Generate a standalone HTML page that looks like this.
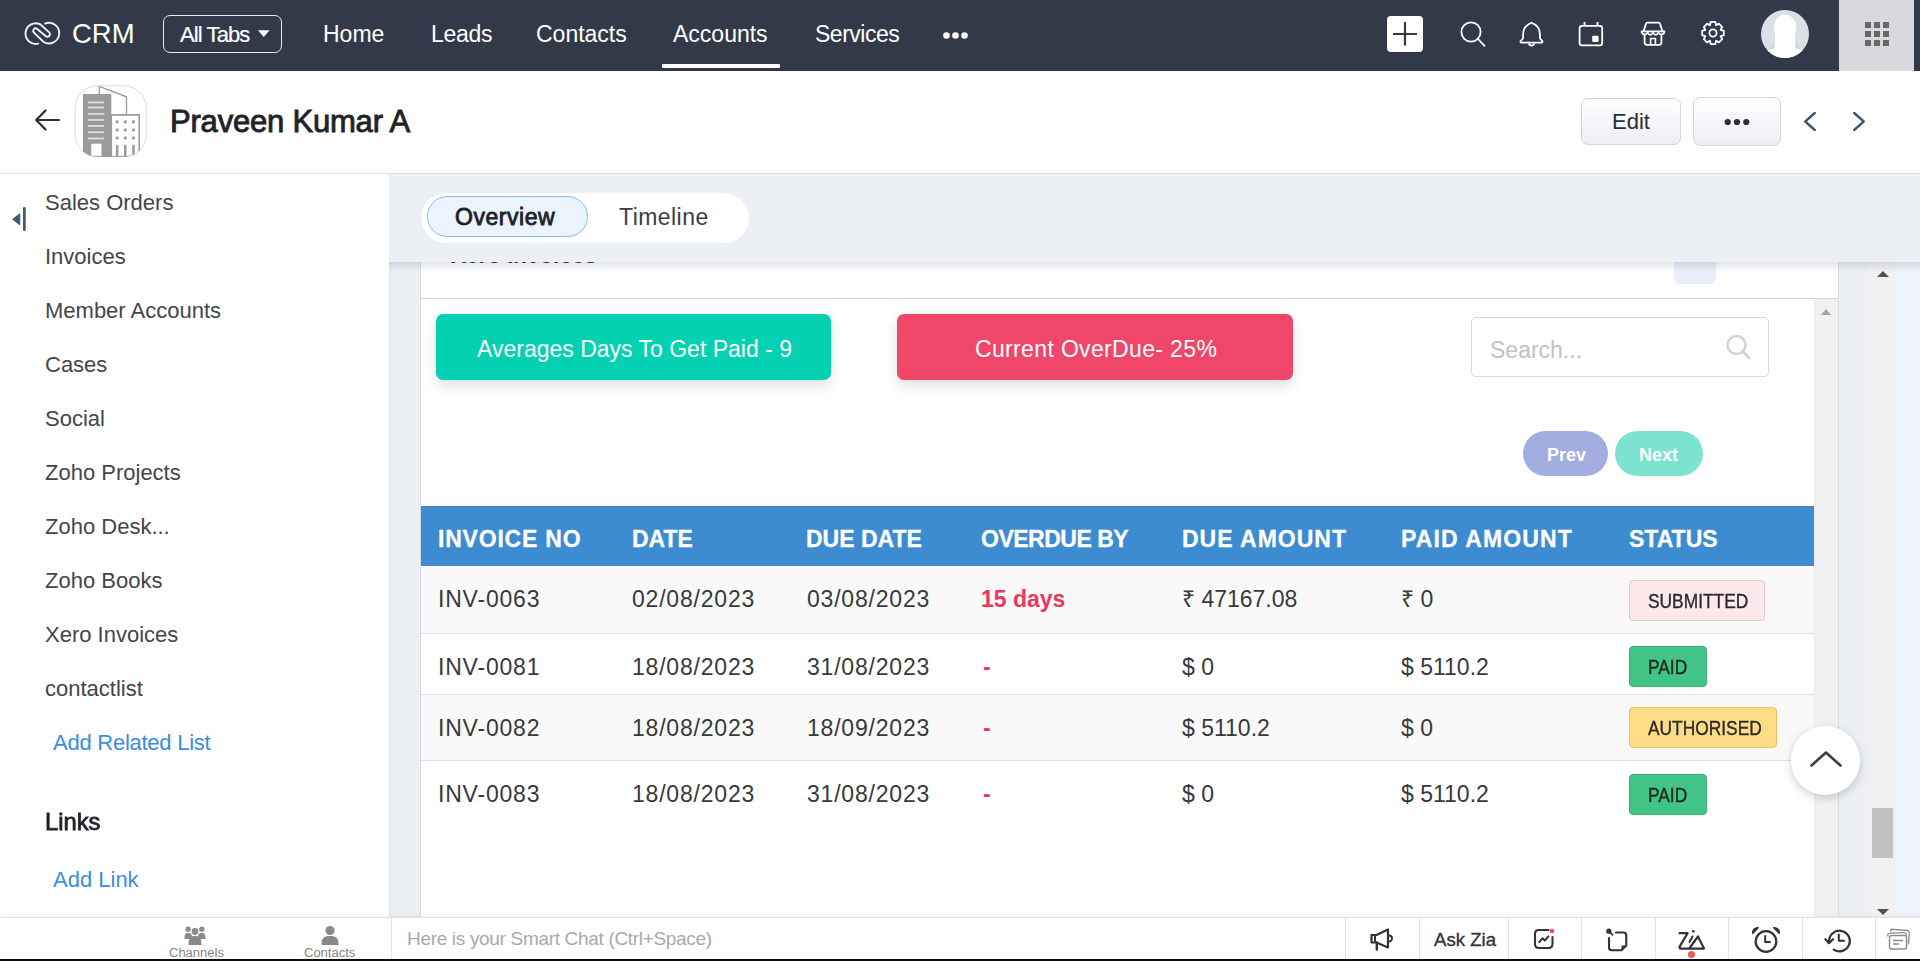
<!DOCTYPE html>
<html><head><meta charset="utf-8">
<style>
*{box-sizing:border-box;margin:0;padding:0}
html,body{width:1920px;height:961px;overflow:hidden;background:#eceff3;font-family:"Liberation Sans",sans-serif;position:relative}
.abs{position:absolute}
.t{position:absolute;white-space:nowrap;line-height:1}
/* nav */
#nav{left:0;top:0;width:1920px;height:71px;background:#323a49;z-index:5}
.nv{color:#fff;font-size:23px}
/* subheader */
#sub{left:0;top:70px;width:1920px;height:104px;background:#fff;border-bottom:1px solid #dcdfe3}
/* sidebar */
#side{left:0;top:174px;width:389px;height:743px;background:#fff}
.si{color:#42464c;font-size:22px}
/* content */
#card{left:421px;top:262px;width:1418px;height:655px;background:#fff}
.th{color:#fff;font-size:23px;font-weight:bold;-webkit-text-stroke:0.3px #fff}
.td{color:#36393d;font-size:23px}
.badge{font-size:19.5px;transform:scaleX(0.89);transform-origin:0 0;-webkit-text-stroke:0.35px currentColor}
</style></head>
<body>
<!-- NAV -->
<div id="nav" class="abs">
  <svg class="abs" style="left:18px;top:16px" width="48" height="36" viewBox="0 0 48 36"><path d="M20.3,27.6 A10.3,10.3 0 1 1 22.2,8.3 L31.2,16.4 A2.5,2.5 0 0 1 27.6,20 L18.9,12.7 A2.5,2.5 0 0 0 15.7,16.4 L25.4,25.8 A10.3,10.3 0 1 0 27,7.6" fill="none" stroke="#eef0f5" stroke-width="1.9" stroke-linecap="round" stroke-linejoin="round"/></svg>
  <div class="t nv" style="left:72px;top:20px;font-size:27.5px">CRM</div>
  <div class="abs" style="left:163px;top:15px;width:119px;height:38px;border:1.5px solid #e8eaee;border-radius:7px"></div>
  <div class="t nv" style="left:180px;top:24px;font-size:22px;letter-spacing:-0.9px;-webkit-text-stroke:0.2px #fff">All Tabs</div>
  <div class="t nv" style="left:323px;top:23px">Home</div>
  <div class="t nv" style="left:431px;top:23px;letter-spacing:-0.3px">Leads</div>
  <div class="t nv" style="left:536px;top:23px">Contacts</div>
  <div class="t nv" style="left:673px;top:23px">Accounts</div>
  <div class="t nv" style="left:815px;top:23px;letter-spacing:-0.5px">Services</div>
  <div class="abs" style="left:662px;top:64px;width:118px;height:4px;background:#fff;border-radius:1px"></div>
  <div class="abs" style="left:1839px;top:0;width:75px;height:71px;background:#d8d9dd"></div>
  <svg class="abs" style="left:258px;top:29px" width="12" height="9" viewBox="0 0 12 9"><path d="M0,1.2 L11.5,1.2 L5.75,8Z" fill="#fff"/></svg>
  <svg class="abs" style="left:941px;top:29px" width="30" height="14" viewBox="0 0 30 14"><circle cx="5.5" cy="6.5" r="3.3" fill="#fff"/><circle cx="14.5" cy="6.5" r="3.3" fill="#fff"/><circle cx="23.5" cy="6.5" r="3.3" fill="#fff"/></svg>
  <svg class="abs" style="left:1387px;top:16px" width="36" height="36" viewBox="0 0 36 36"><rect x="0" y="0" width="36" height="36" rx="4" fill="#fff"/><path d="M18,6 V29.5 M6,18 H30" stroke="#323a4a" stroke-width="2.2"/></svg>
  <svg class="abs" style="left:1458px;top:19px" width="30" height="30" viewBox="0 0 30 30"><circle cx="13" cy="13" r="9.6" fill="none" stroke="#fff" stroke-width="1.8"/><path d="M20,20 L26.5,26.8" stroke="#fff" stroke-width="1.8" stroke-linecap="round"/></svg>
  <svg class="abs" style="left:1518px;top:19px" width="28" height="30" viewBox="0 0 28 30"><path d="M5,19.5 C5,13 4.8,7 13.5,3.8 C22.2,7 22,13 22,19.5 L24.3,22 C24.8,22.7 24.4,23.6 23.5,23.6 H3.5 C2.6,23.6 2.2,22.7 2.7,22 Z" fill="none" stroke="#fff" stroke-width="1.8" stroke-linejoin="round"/><path d="M10.8,24.6 A2.8,2.8 0 0 0 16.2,24.6" fill="none" stroke="#fff" stroke-width="1.8"/></svg>
  <svg class="abs" style="left:1576px;top:19px" width="30" height="30" viewBox="0 0 30 30"><rect x="3.6" y="6.8" width="22.6" height="19.6" rx="2.4" fill="none" stroke="#fff" stroke-width="1.8"/><path d="M8.5,3 V7 M21.5,3 V7" stroke="#fff" stroke-width="1.8"/><rect x="16.2" y="16.8" width="6.4" height="6.2" rx="1.2" fill="#fff"/></svg>
  <svg class="abs" style="left:1638px;top:19px" width="30" height="30" viewBox="0 0 30 30"><path d="M5.5,12.5 L7.8,5.2 C8.1,4.2 8.8,3.7 9.8,3.7 H20.2 C21.2,3.7 21.9,4.2 22.2,5.2 L24.5,12.5" fill="none" stroke="#fff" stroke-width="1.8" stroke-linejoin="round"/><path d="M3.6,12.3 H26.4 C26.4,16 22,16.5 20.5,13.6 C19,16.5 16.5,16.5 15,13.6 C13.5,16.5 11,16.5 9.5,13.6 C8,16.5 3.6,16 3.6,12.3Z" fill="none" stroke="#fff" stroke-width="1.7" stroke-linejoin="round"/><path d="M6.6,15.8 V23.6 C6.6,25 7.3,25.8 8.8,25.8 H21.2 C22.7,25.8 23.4,25 23.4,23.6 V15.8" fill="none" stroke="#fff" stroke-width="1.8"/><path d="M12.6,25.8 V19.5 H17.4 V25.8" fill="none" stroke="#fff" stroke-width="1.7"/></svg>
  <svg class="abs" style="left:1699px;top:19px" width="28" height="28" viewBox="0 0 28 28"><g transform="translate(14,14) scale(0.9) translate(-14,-16)"><path d="M11.4,3.6 H16.6 L17.4,7.4 L20.6,5.6 L24.2,9.4 L22.4,12.6 L26,13.6 V18.6 L22.4,19.6 L24.2,22.8 L20.6,26.4 L17.4,24.6 L16.6,28.4 H11.4 L10.6,24.6 L7.4,26.4 L3.8,22.8 L5.6,19.6 L2,18.6 V13.6 L5.6,12.6 L3.8,9.4 L7.4,5.6 L10.6,7.4 Z" fill="none" stroke="#fff" stroke-width="2" stroke-linejoin="round"/><circle cx="14" cy="16" r="4" fill="none" stroke="#fff" stroke-width="2"/></g></svg>
  <svg class="abs" style="left:1761px;top:10px" width="48" height="48" viewBox="0 0 48 48"><defs><clipPath id="av"><circle cx="24" cy="24" r="24"/></clipPath><filter id="bl"><feGaussianBlur stdDeviation="0.7"/></filter></defs><circle cx="24" cy="24" r="24" fill="#dcdfe4"/><g clip-path="url(#av)"><g fill="#fff" filter="url(#bl)"><ellipse cx="24" cy="17.5" rx="11" ry="13"/><rect x="14" y="22" width="20" height="16" rx="4"/><path d="M0,60 C0,44 6,37 18,36 H30 C42,37 48,44 48,60Z"/></g><path d="M12.5,30 C12.5,34 13,37 14,38 L8,40 C10,36 11,33 12.5,30Z M35.5,30 C35.5,34 35,37 34,38 L40,40 C38,36 37,33 35.5,30Z" fill="#d3d6db" filter="url(#bl)"/></g></svg>
  <svg class="abs" style="left:1864px;top:21px" width="26" height="26" viewBox="0 0 26 26" fill="#686868"><rect x="1" y="1" width="6" height="6"/><rect x="10" y="1" width="6" height="6"/><rect x="19" y="1" width="6" height="6"/><rect x="1" y="10" width="6" height="6"/><rect x="10" y="10" width="6" height="6"/><rect x="19" y="10" width="6" height="6"/><rect x="1" y="19" width="6" height="6"/><rect x="10" y="19" width="6" height="6"/><rect x="19" y="19" width="6" height="6"/></svg>

</div>
<!-- SUBHEADER -->
<div id="sub" class="abs">
  <div class="t" style="left:170px;top:36px;font-size:31px;color:#1f2328;-webkit-text-stroke:0.9px #1f2328;letter-spacing:-0.2px">Praveen Kumar A</div>
  <div class="abs" style="left:1581px;top:28px;width:100px;height:47px;border:1px solid #d3d6dc;border-radius:7px;background:linear-gradient(#fff,#eceef4)"></div>
  <div class="t" style="left:1612px;top:41px;font-size:22px;color:#2b2d3a">Edit</div>
  <div class="abs" style="left:1693px;top:27px;width:88px;height:49px;border:1px solid #d3d6dc;border-radius:7px;background:linear-gradient(#fff,#eceef4)"></div>

  <svg class="abs" style="left:32px;top:36px" width="30" height="28" viewBox="0 0 30 28"><path d="M27,14 H5 M13.5,4.5 L4.2,14 L13.5,23.5" fill="none" stroke="#2b2f36" stroke-width="2.2" stroke-linecap="round" stroke-linejoin="round"/></svg>
  <svg class="abs" style="left:70px;top:12px" width="82" height="80" viewBox="0 0 82 80"><defs><clipPath id="bc"><rect x="5.2" y="3.75" width="71" height="71" rx="22"/></clipPath></defs>
   <rect x="5.2" y="3.75" width="71" height="71" rx="22" fill="#fff" stroke="#dcdcdc" stroke-width="1"/>
   <g clip-path="url(#bc)">
    <path d="M29.3,12 V4.4 L56.5,14.8 V32.5" fill="none" stroke="#9a9a9a" stroke-width="1.3"/>
    <rect x="12.9" y="12" width="28.4" height="70" fill="#9b9b9b"/>
    <g fill="#e2e2e2"><rect x="17.9" y="19.6" width="16.3" height="1.7"/><rect x="17.9" y="24.6" width="16.3" height="1.7"/><rect x="17.9" y="31" width="16.3" height="1.7"/><rect x="17.9" y="37.1" width="16.3" height="1.7"/><rect x="17.9" y="43.1" width="16.3" height="1.7"/><rect x="17.9" y="49.4" width="16.3" height="1.7"/><rect x="17.9" y="55.6" width="16.3" height="1.7"/></g>
    <rect x="21.25" y="61.7" width="10.25" height="20" fill="#fff"/>
    <path d="M41.3,74.5 V32.9 H69.2 V74.5" fill="none" stroke="#9b9b9b" stroke-width="1.6"/>
    <g fill="#9b9b9b"><rect x="45.7" y="38.4" width="2.9" height="2.9"/><rect x="53.8" y="38.4" width="2.9" height="2.9"/><rect x="62" y="38.4" width="2.9" height="2.9"/><rect x="45.7" y="46.5" width="2.9" height="2.9"/><rect x="53.8" y="46.5" width="2.9" height="2.9"/><rect x="62" y="46.5" width="2.9" height="2.9"/><rect x="45.7" y="54.6" width="2.9" height="2.9"/><rect x="53.8" y="54.6" width="2.9" height="2.9"/><rect x="62" y="54.6" width="2.9" height="2.9"/><rect x="45.9" y="62.9" width="2.5" height="14"/><rect x="54" y="62.9" width="2.5" height="14"/><rect x="62.2" y="62.9" width="2.5" height="14"/><rect x="5" y="73.8" width="72" height="2"/></g>
   </g>
  </svg>
  <svg class="abs" style="left:1720px;top:46px" width="34" height="12" viewBox="0 0 34 12"><circle cx="7.7" cy="6" r="3.1" fill="#2d2f38"/><circle cx="17" cy="6" r="3.1" fill="#2d2f38"/><circle cx="26.3" cy="6" r="3.1" fill="#2d2f38"/></svg>
  <svg class="abs" style="left:1798px;top:38px" width="24" height="26" viewBox="0 0 24 26"><path d="M16.8,5 L7.2,13.5 L16.8,22" fill="none" stroke="#3d5a70" stroke-width="2.4" stroke-linecap="round" stroke-linejoin="round"/></svg>
  <svg class="abs" style="left:1847px;top:38px" width="24" height="26" viewBox="0 0 24 26"><path d="M7.2,5 L16.8,13.5 L7.2,22" fill="none" stroke="#3d5a70" stroke-width="2.4" stroke-linecap="round" stroke-linejoin="round"/></svg>
</div>
<!-- SIDEBAR -->
<div id="side" class="abs">
  <svg class="abs" style="left:10px;top:31px" width="20" height="28" viewBox="0 0 20 28"><path d="M2.6,14.3 L9.8,8.6 V20Z" fill="#3e5a70" stroke="#3e5a70" stroke-width="0.8" stroke-linejoin="round"/><rect x="13" y="2" width="2.7" height="24" rx="1.3" fill="#3e5a70"/></svg>
  <div class="t si" style="left:45px;top:18px">Sales Orders</div>
  <div class="t si" style="left:45px;top:72px">Invoices</div>
  <div class="t si" style="left:45px;top:126px">Member Accounts</div>
  <div class="t si" style="left:45px;top:180px">Cases</div>
  <div class="t si" style="left:45px;top:234px">Social</div>
  <div class="t si" style="left:45px;top:288px">Zoho Projects</div>
  <div class="t si" style="left:45px;top:342px">Zoho Desk...</div>
  <div class="t si" style="left:45px;top:396px">Zoho Books</div>
  <div class="t si" style="left:45px;top:450px">Xero Invoices</div>
  <div class="t si" style="left:45px;top:504px">contactlist</div>
  <div class="t si" style="left:53px;top:558px;color:#3a8de0;letter-spacing:-0.25px">Add Related List</div>
  <div class="t si" style="left:45px;top:636px;font-size:24px;color:#1f2328;-webkit-text-stroke:0.8px #1f2328;transform:scaleX(0.99);transform-origin:0 0">Links</div>
  <div class="t si" style="left:53px;top:695px;color:#3a8de0">Add Link</div>
</div>
<!-- CONTENT CARD -->
<div class="abs" style="left:420px;top:262px;width:1px;height:655px;background:#d8dbdf"></div>
<div class="abs" style="left:389px;top:174px;width:3px;height:743px;background:linear-gradient(90deg,#e3e5e9,#eceff3)"></div>
<div id="card" class="abs">
  <div class="t" style="left:30px;top:-18px;font-size:23px;font-weight:bold;color:#1f2328;letter-spacing:-0.3px">Xero Invoices</div>
  <div class="abs" style="left:1253px;top:0;width:42px;height:22px;background:#e9eefa;border-radius:0 0 6px 6px"></div>
  <div class="abs" style="left:0;top:36px;width:1418px;height:1px;background:#d5d8dc"></div>
  <!-- inner scrollbar -->
  <div class="abs" style="left:1393px;top:37px;width:25px;height:618px;background:#f1f1f1;border-left:1px solid #ececec"></div>
  <div class="abs" style="left:1417px;top:0;width:1px;height:655px;background:#d9dcdf"></div>
  <div class="abs" style="left:1400px;top:47px;width:0;height:0;border-left:5.5px solid transparent;border-right:5.5px solid transparent;border-bottom:6px solid #a3a3a3"></div>
  <!-- teal -->
  <div class="abs" style="left:15px;top:52px;width:395px;height:66px;background:#03d1b2;border-radius:7px;box-shadow:0 6px 14px rgba(0,0,0,.12)"></div>
  <div class="t" style="left:56px;top:76px;font-size:23px;color:#fff">Averages Days To Get Paid - 9</div>
  <!-- red -->
  <div class="abs" style="left:476px;top:52px;width:396px;height:66px;background:#ef4669;border-radius:7px;box-shadow:0 6px 14px rgba(0,0,0,.12)"></div>
  <div class="t" style="left:554px;top:76px;font-size:23px;color:#fff;letter-spacing:0.35px">Current OverDue- 25%</div>
  <!-- search -->
  <div class="abs" style="left:1050px;top:55px;width:298px;height:60px;border:1px solid #d9d9d9;border-radius:5px;background:#fff"></div>
  <div class="t" style="left:1069px;top:77px;font-size:23px;color:#c2c2c2">Search...</div>
  <svg class="abs" style="left:1303px;top:71px" width="32" height="28" viewBox="0 0 32 28"><circle cx="12.5" cy="12" r="9" fill="none" stroke="#d2d2d2" stroke-width="2.4"/><line x1="19" y1="18.5" x2="25" y2="25" stroke="#d2d2d2" stroke-width="2.6" stroke-linecap="round"/></svg>
  <!-- prev/next -->
  <div class="abs" style="left:1102px;top:169px;width:85px;height:45px;background:#a2aee0;border-radius:23px"></div>
  <div class="t" style="left:1126px;top:184px;font-size:18px;font-weight:bold;color:#fff">Prev</div>
  <div class="abs" style="left:1194px;top:169px;width:88px;height:45px;background:#7ce3d0;border-radius:23px"></div>
  <div class="t" style="left:1218px;top:184px;font-size:18px;font-weight:bold;color:#fff">Next</div>
  <!-- table -->
  <div class="abs" style="left:0;top:244px;width:1393px;height:60px;background:#3d8bd0"></div>
  <div class="t th" style="left:17px;top:266px;letter-spacing:0.8px">INVOICE NO</div>
  <div class="t th" style="left:211px;top:266px">DATE</div>
  <div class="t th" style="left:385px;top:266px">DUE DATE</div>
  <div class="t th" style="left:560px;top:266px;letter-spacing:-0.5px">OVERDUE BY</div>
  <div class="t th" style="left:761px;top:266px;letter-spacing:1.0px">DUE AMOUNT</div>
  <div class="t th" style="left:980px;top:266px;letter-spacing:1.1px">PAID AMOUNT</div>
  <div class="t th" style="left:1208px;top:266px">STATUS</div>
  <!-- row1 -->
  <div class="abs" style="left:0;top:304px;width:1393px;height:68px;background:#f9f9f9;border-bottom:1px solid #dee2e6"></div>
  <div class="t td" style="left:17px;top:326px;letter-spacing:0.8px">INV-0063</div>
  <div class="t td" style="left:211px;top:326px;letter-spacing:0.8px">02/08/2023</div>
  <div class="t td" style="left:386px;top:326px;letter-spacing:0.8px">03/08/2023</div>
  <div class="t td" style="left:560px;top:326px;color:#e8385f;font-weight:bold">15 days</div>
  <div class="t td" style="left:761px;top:326px">₹ 47167.08</div>
  <div class="t td" style="left:980px;top:326px">₹ 0</div>
  <div class="abs" style="left:1208px;top:318px;width:136px;height:41px;background:#fde9ec;border:1px solid #e5c7cc;border-radius:4px"></div>
  <div class="t badge" style="left:1227px;top:330px;color:#2a2a2a">SUBMITTED</div>
  <!-- row2 -->
  <div class="abs" style="left:0;top:372px;width:1393px;height:61px;background:#fff;border-bottom:1px solid #dee2e6"></div>
  <div class="t td" style="left:17px;top:394px;letter-spacing:0.8px">INV-0081</div>
  <div class="t td" style="left:211px;top:394px;letter-spacing:0.8px">18/08/2023</div>
  <div class="t td" style="left:386px;top:394px;letter-spacing:0.8px">31/08/2023</div>
  <div class="t td" style="left:562px;top:394px;color:#e8385f;font-weight:bold">-</div>
  <div class="t td" style="left:761px;top:394px">$ 0</div>
  <div class="t td" style="left:980px;top:394px">$ 5110.2</div>
  <div class="abs" style="left:1208px;top:384px;width:78px;height:41px;background:#42c484;border:1px solid #3bb576;border-radius:4px"></div>
  <div class="t badge" style="left:1227px;top:396px;color:#1f2a24">PAID</div>
  <!-- row3 -->
  <div class="abs" style="left:0;top:433px;width:1393px;height:66px;background:#f9f9f9;border-bottom:1px solid #dee2e6"></div>
  <div class="t td" style="left:17px;top:455px;letter-spacing:0.8px">INV-0082</div>
  <div class="t td" style="left:211px;top:455px;letter-spacing:0.8px">18/08/2023</div>
  <div class="t td" style="left:386px;top:455px;letter-spacing:0.8px">18/09/2023</div>
  <div class="t td" style="left:562px;top:455px;color:#e8385f;font-weight:bold">-</div>
  <div class="t td" style="left:761px;top:455px">$ 5110.2</div>
  <div class="t td" style="left:980px;top:455px">$ 0</div>
  <div class="abs" style="left:1208px;top:445px;width:148px;height:41px;background:#fedc85;border:1px solid #e8c56a;border-radius:4px"></div>
  <div class="t badge" style="left:1227px;top:457px;color:#2a2a2a">AUTHORISED</div>
  <!-- row4 -->
  <div class="t td" style="left:17px;top:521px;letter-spacing:0.8px">INV-0083</div>
  <div class="t td" style="left:211px;top:521px;letter-spacing:0.8px">18/08/2023</div>
  <div class="t td" style="left:386px;top:521px;letter-spacing:0.8px">31/08/2023</div>
  <div class="t td" style="left:562px;top:521px;color:#e8385f;font-weight:bold">-</div>
  <div class="t td" style="left:761px;top:521px">$ 0</div>
  <div class="t td" style="left:980px;top:521px">$ 5110.2</div>
  <div class="abs" style="left:1208px;top:512px;width:78px;height:41px;background:#42c484;border:1px solid #3bb576;border-radius:4px"></div>
  <div class="t badge" style="left:1227px;top:524px;color:#1f2a24">PAID</div>
</div>
<!-- TABS HEADER -->
<div class="abs" style="left:389px;top:174px;width:1531px;height:88px;background:#eceff3"></div>
<div class="abs" style="left:421px;top:193px;width:328px;height:50px;background:#fff;border-radius:25px"></div>
<div class="abs" style="left:427px;top:196px;width:161px;height:41px;background:#ebf4fd;border:1px solid #8bbde8;border-radius:21px"></div>
<div class="t" style="left:455px;top:206px;font-size:23px;color:#1f2328;-webkit-text-stroke:0.85px #1f2328;letter-spacing:0.55px">Overview</div>
<div class="t" style="left:619px;top:206px;font-size:23px;color:#3a3e44;letter-spacing:0.45px">Timeline</div>
<!-- FOOTER -->
<!-- outer page scrollbar -->
<div class="abs" style="left:1870px;top:262px;width:26px;height:655px;background:#f1f1f1"></div>
<div class="abs" style="left:1896px;top:262px;width:24px;height:655px;background:#eef2fa"></div>
<div class="abs" style="left:1877px;top:271px;width:0;height:0;border-left:6px solid transparent;border-right:6px solid transparent;border-bottom:6px solid #505050"></div>
<div class="abs" style="left:1877px;top:909px;width:0;height:0;border-left:6px solid transparent;border-right:6px solid transparent;border-top:6px solid #505050"></div>
<div class="abs" style="left:1872px;top:808px;width:21px;height:50px;background:#c1c1c1"></div>
<!-- header shadow -->
<div class="abs" style="left:389px;top:262px;width:1531px;height:10px;background:linear-gradient(rgba(120,130,145,.22),rgba(120,130,145,0))"></div>
<!-- scroll top btn -->
<div class="abs" style="left:1791px;top:726px;width:69px;height:69px;border-radius:50%;background:#fff;box-shadow:0 3px 10px rgba(0,0,0,.18)"></div>
<svg class="abs" style="left:1808px;top:746px" width="36" height="26" viewBox="0 0 36 26"><path d="M3.5,19.5 L18,6.5 L32.5,19.5" fill="none" stroke="#3a3d42" stroke-width="2.6" stroke-linecap="round" stroke-linejoin="round"/></svg>
<!-- FOOTER -->
<div class="abs" style="left:0;top:917px;width:1920px;height:44px;background:#fff;border-top:1px solid #e0e2e6;box-shadow:0 -2px 4px rgba(0,0,0,.04)"></div>
<div class="abs" style="left:391px;top:917px;width:1px;height:42px;background:#e3e5e8"></div>
<svg class="abs" style="left:184px;top:925px" width="22" height="22" viewBox="0 0 22 22" fill="#8a8a8a"><circle cx="4.2" cy="4.2" r="2.6"/><circle cx="17.8" cy="4.2" r="2.6"/><circle cx="11" cy="6.5" r="3.4"/><path d="M0.5,13 C0.5,8.5 2,8 4.2,8 C6.4,8 7.5,8.5 7.8,10.5 L7.5,14 H0.5Z"/><path d="M21.5,13 C21.5,8.5 20,8 17.8,8 C15.6,8 14.5,8.5 14.2,10.5 L14.5,14 H21.5Z"/><path d="M4.5,20 C4.5,12.5 6.5,11 11,11 C15.5,11 17.5,12.5 17.5,20Z"/></svg>
<div class="t" style="left:169px;top:946px;font-size:13px;color:#858585">Channels</div>
<svg class="abs" style="left:320px;top:925px" width="20" height="22" viewBox="0 0 20 22" fill="#8a8a8a"><circle cx="10" cy="5.5" r="4.6"/><path d="M1.5,20 C1.5,13 3.5,11 10,11 C16.5,11 18.5,13 18.5,20Z"/></svg>
<div class="t" style="left:304px;top:946px;font-size:13px;color:#858585">Contacts</div>
<div class="t" style="left:407px;top:929px;font-size:19px;color:#a9a9a9;letter-spacing:-0.32px">Here is your Smart Chat (Ctrl+Space)</div>
<div class="abs" style="left:1345px;top:918px;width:1px;height:41px;background:#e0e2e6"></div>
<div class="abs" style="left:1419px;top:918px;width:1px;height:41px;background:#e0e2e6"></div>
<div class="abs" style="left:1508px;top:918px;width:1px;height:41px;background:#e0e2e6"></div>
<div class="abs" style="left:1581px;top:918px;width:1px;height:41px;background:#e0e2e6"></div>
<div class="abs" style="left:1655px;top:918px;width:1px;height:41px;background:#e0e2e6"></div>
<div class="abs" style="left:1728px;top:918px;width:1px;height:41px;background:#e0e2e6"></div>
<div class="abs" style="left:1802px;top:918px;width:1px;height:41px;background:#e0e2e6"></div>
<div class="abs" style="left:1875px;top:918px;width:1px;height:41px;background:#e0e2e6"></div>
<div class="t" style="left:1434px;top:931px;font-size:18.6px;color:#30333a;-webkit-text-stroke:0.35px #30333a">Ask Zia</div>
<svg class="abs" style="left:1368px;top:926px" width="30" height="26" viewBox="0 0 30 26"><path d="M3.5,9 H8.5 L20,3.5 V21.5 L8.5,16.5 H3.5Z" fill="none" stroke="#30333a" stroke-width="2.2" stroke-linejoin="round"/><path d="M7,9 V16.5" stroke="#30333a" stroke-width="2"/><path d="M8.8,16.5 V23.5" stroke="#30333a" stroke-width="2.4" stroke-linecap="round"/><path d="M21,9.5 A3,3 0 0 1 21,15.5" fill="none" stroke="#30333a" stroke-width="2"/></svg>
<svg class="abs" style="left:1531px;top:926px" width="28" height="26" viewBox="0 0 28 26"><path d="M17.5,4 H8 C5,4 4,5 4,8 V18 C4,21 5,22 8,22 H17.5 C20.5,22 21.5,21 21.5,18 V11" fill="none" stroke="#30333a" stroke-width="2.1" stroke-linecap="round"/><path d="M8.3,16.2 L11.6,12.2 L13.8,14.6 L17.4,10.4" fill="none" stroke="#30333a" stroke-width="2" stroke-linecap="round" stroke-linejoin="round"/><circle cx="21" cy="5" r="2.3" fill="#ef4b55"/></svg>
<svg class="abs" style="left:1603px;top:926px" width="28" height="28" viewBox="0 0 28 28"><circle cx="5.8" cy="5.2" r="2.6" fill="#30333a"/><path d="M6,5.4 L10,9.4" stroke="#30333a" stroke-width="2"/><path d="M13,6.5 H20.5 C22.5,6.5 23.3,7.3 23.3,9.3 V19.5 L18.5,24.2 H8.8 C6.8,24.2 6,23.4 6,21.4 V12" fill="none" stroke="#30333a" stroke-width="2.1" stroke-linecap="round" stroke-linejoin="round"/><path d="M23.3,19.5 H18.5 V24.2Z" fill="#30333a"/></svg>
<svg class="abs" style="left:1676px;top:927px" width="32" height="32" viewBox="0 0 32 32"><path d="M3.6,6.2 H11.6 L3.6,19.6 C3.2,20.4 3.6,21.6 5,21.6 H28 L22,9.5 L13.2,21.5" fill="none" stroke="#30333a" stroke-width="2.2" stroke-linecap="round" stroke-linejoin="round"/><circle cx="17.3" cy="4.3" r="1.3" fill="#30333a"/><path d="M16.5,9.5 L13.5,15" stroke="#30333a" stroke-width="2" stroke-linecap="round"/><circle cx="15.5" cy="27.5" r="3.6" fill="#ef5a5a"/></svg>
<svg class="abs" style="left:1751px;top:926px" width="30" height="28" viewBox="0 0 30 28"><circle cx="15" cy="15.5" r="10.3" fill="none" stroke="#30333a" stroke-width="2.3"/><path d="M14.2,10 V16 H19" fill="none" stroke="#30333a" stroke-width="2" stroke-linecap="round" stroke-linejoin="round"/><path d="M1.8,7.2 C1.6,3.6 4,1.6 7.2,1.8 Z" fill="#30333a" stroke="#30333a" stroke-width="1.6" stroke-linejoin="round"/><path d="M28.2,7.2 C28.4,3.6 26,1.6 22.8,1.8 Z" fill="#30333a" stroke="#30333a" stroke-width="1.6" stroke-linejoin="round"/></svg>
<svg class="abs" style="left:1823px;top:926px" width="30" height="28" viewBox="0 0 30 28"><path d="M6.2,15.8 A10.3,10.3 0 1 1 10.8,23.6" fill="none" stroke="#30333a" stroke-width="2.3" stroke-linecap="round"/><path d="M2.4,13.2 L6,17.2 L10,13.2" fill="none" stroke="#30333a" stroke-width="2.2" stroke-linecap="round" stroke-linejoin="round"/><path d="M15.8,8.6 V14.8 H21" fill="none" stroke="#30333a" stroke-width="2" stroke-linecap="round" stroke-linejoin="round"/></svg>
<svg class="abs" style="left:1885px;top:927px" width="26" height="24" viewBox="0 0 26 24"><path d="M5.5,4.5 L6.2,2.3 L22.5,3.5 C23.8,3.7 24.3,4.4 24.2,5.6 L23.6,16.8" fill="none" stroke="#8c8c8c" stroke-width="1.3"/><path d="M2.8,9.5 C2.4,7.4 3,6.4 5,6.2 L18.5,5.6 C20.3,5.5 21.2,6.2 21.3,8 L21.8,18.5" fill="none" stroke="#8c8c8c" stroke-width="1.3"/><rect x="4.5" y="8.5" width="17" height="13.5" rx="2" fill="#fff" stroke="#8c8c8c" stroke-width="1.4"/><path d="M8,13.5 H18 M8,17 H14" stroke="#8c8c8c" stroke-width="1.4"/></svg>
<div class="abs" style="left:0;top:959px;width:1920px;height:2px;background:#0c0c14"></div>
</body></html>
